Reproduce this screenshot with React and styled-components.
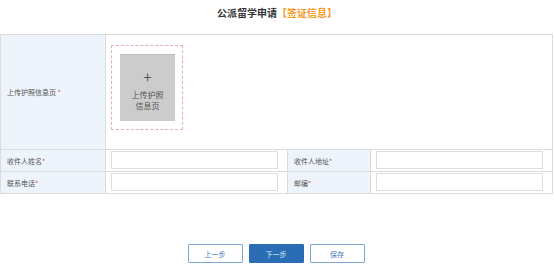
import React from "react";
import styled, { createGlobalStyle } from "styled-components";

const Global = createGlobalStyle`
  html, body {
    margin: 0;
    padding: 0;
    background: #fff;
    font-family: "Noto Sans CJK SC", "Noto Sans", sans-serif;
  }
`;

export default function App() {
  return (
    <Page>
      <Global />
      <Title>
        公派留学申请<em>【签证信息】</em>
      </Title>
      <FormTable>
        <colgroup>
          <col style={{ width: 105 }} />
          <col style={{ width: 182 }} />
          <col style={{ width: 83 }} />
          <col style={{ width: 182 }} />
        </colgroup>
        <tbody>
          <tr>
            <Label>
              上传护照信息页 <Star>*</Star>
            </Label>
            <Cell colSpan={3} $tall>
              <Upload>
                <UploadInner>
                  <Plus>+</Plus>
                  <span>上传护照</span>
                  <span>信息页</span>
                </UploadInner>
              </Upload>
            </Cell>
          </tr>
          <tr>
            <Label>
              收件人姓名<Star>*</Star>
            </Label>
            <Cell>
              <Input />
            </Cell>
            <Label>
              收件人地址<Star>*</Star>
            </Label>
            <Cell>
              <Input />
            </Cell>
          </tr>
          <tr>
            <Label>
              联系电话<Star>*</Star>
            </Label>
            <Cell>
              <Input />
            </Cell>
            <Label>
              邮编<Star>*</Star>
            </Label>
            <Cell>
              <Input />
            </Cell>
          </tr>
        </tbody>
      </FormTable>
      <Actions>
        <Button>上一步</Button>
        <Button $primary>下一步</Button>
        <Button>保存</Button>
      </Actions>
    </Page>
  );
}

const Page = styled.div`
  width: 554px;
  height: 273px;
  overflow: hidden;
`;

const Title = styled.h1`
  margin: 0;
  height: 34px;
  padding-top: 4px;
  box-sizing: border-box;
  text-align: center;
  font-size: 10px;
  line-height: 18px;
  font-weight: bold;
  color: #333;

  em {
    font-style: normal;
    color: #f59a23;
  }
`;

const FormTable = styled.table`
  width: 553px;
  border-collapse: collapse;
  table-layout: fixed;
  font-size: 7px;
  color: #555;
`;

const Label = styled.td`
  background: #eef4fc;
  border: 1px solid #dcdcdc;
  padding: 0 0 0 6px;
  height: 21px;
  vertical-align: middle;
`;

const Star = styled.span`
  color: #e04848;
`;

const Cell = styled.td`
  border: 1px solid #dcdcdc;
  padding: ${(p) => (p.$tall ? "10px 5px 19px" : "1px 9px 1px 5px")};
  height: ${(p) => (p.$tall ? "114px" : "21px")};
  box-sizing: border-box;
  vertical-align: top;
`;

const Upload = styled.div`
  width: 72px;
  height: 85px;
  box-sizing: border-box;
  border: 1px dashed #e3b0b0;
  padding: 8px;
`;

const UploadInner = styled.div`
  width: 55px;
  height: 67px;
  background: #cccccc;
  border-top: 1px solid #bdbdbd;
  box-sizing: border-box;
  display: flex;
  flex-direction: column;
  align-items: center;
  justify-content: center;
  padding-top: 2px;
  color: #555;
  font-size: 8px;
  line-height: 11px;
`;

const Plus = styled.span`
  font-size: 16px;
  line-height: 16px;
  font-weight: 300;
  color: #444;
  margin-bottom: 5px;
`;

const Input = styled.input`
  display: block;
  width: 100%;
  height: 18px;
  box-sizing: border-box;
  border: 1px solid #dedede;
  outline: none;
  margin: 0;
  padding: 0 4px;
  background: #fff;
`;

const Actions = styled.div`
  display: flex;
  justify-content: center;
  gap: 6px;
  margin-top: 50px;
  padding-right: 2px;
`;

const Button = styled.button`
  width: 55px;
  height: 19px;
  box-sizing: border-box;
  border: 1px solid ${(p) => (p.$primary ? "#2a6db5" : "#7ea8d8")};
  background: ${(p) => (p.$primary ? "#2a6db5" : "#fff")};
  color: ${(p) => (p.$primary ? "#d8e6f6" : "#3b76b8")};
  border-radius: 1px;
  font-family: inherit;
  font-size: 7px;
  padding: 0;
  cursor: pointer;
`;
